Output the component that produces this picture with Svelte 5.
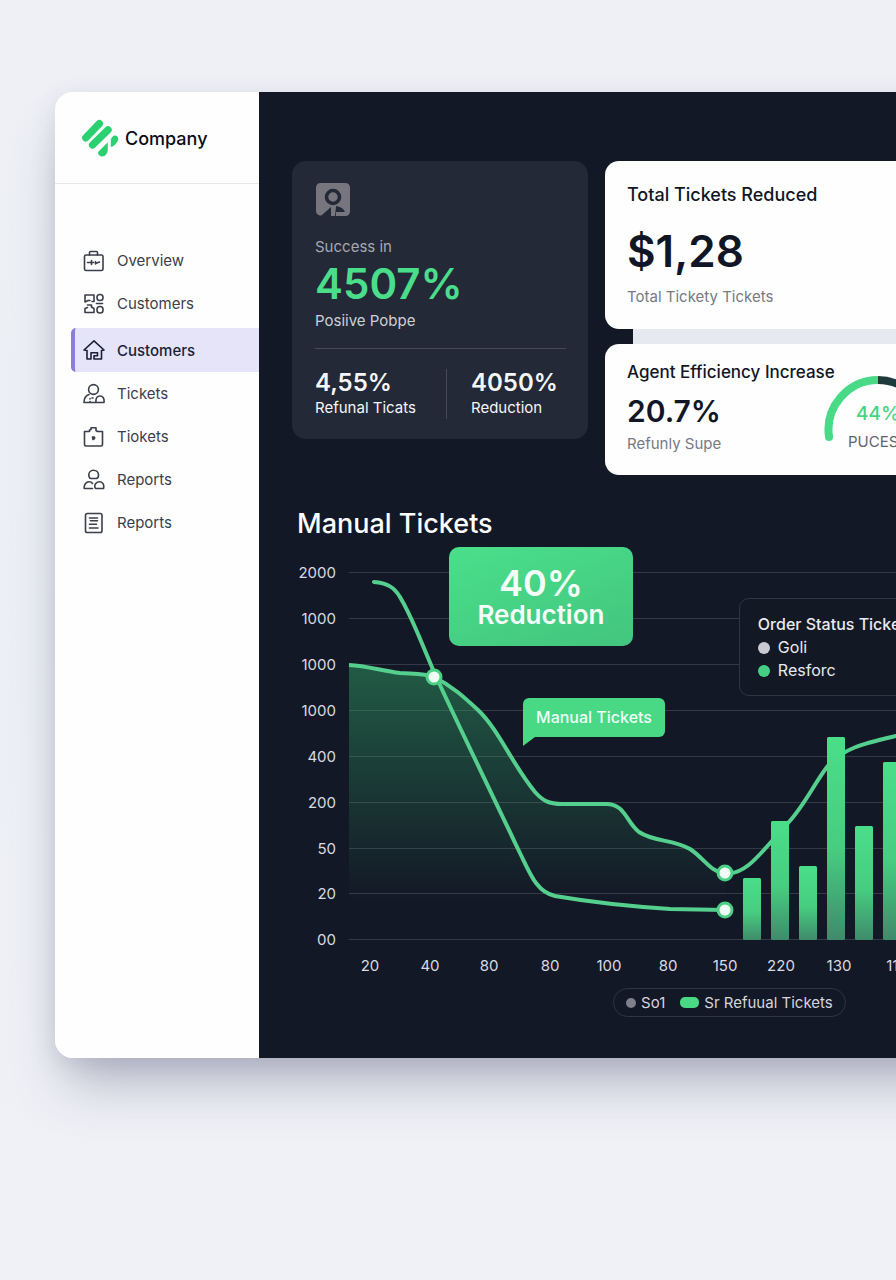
<script>
  const nav = [
    { label: 'Overview', icon: 'case' },
    { label: 'Customers', icon: 'grid' },
    { label: 'Customers', icon: 'home', active: true },
    { label: 'Tickets', icon: 'agent' },
    { label: 'Tiokets', icon: 'bag' },
    { label: 'Reports', icon: 'group' },
    { label: 'Reports', icon: 'doc' }
  ];

  const rows = [
    { y: 573, label: '2000' },
    { y: 619, label: '1000' },
    { y: 665, label: '1000' },
    { y: 711, label: '1000' },
    { y: 757, label: '400' },
    { y: 803, label: '200' },
    { y: 849, label: '50' },
    { y: 894, label: '20' },
    { y: 940, label: '00' }
  ];

  const ticks = [
    { x: 370, label: '20' },
    { x: 430, label: '40' },
    { x: 489, label: '80' },
    { x: 550, label: '80' },
    { x: 609, label: '100' },
    { x: 668, label: '80' },
    { x: 725, label: '150' },
    { x: 781, label: '220' },
    { x: 839, label: '130' },
    { x: 897, label: '110' }
  ];

  const bars = [
    { x: 743, top: 878 },
    { x: 771, top: 821 },
    { x: 799, top: 866 },
    { x: 827, top: 737 },
    { x: 855, top: 826 },
    { x: 883, top: 762 }
  ];

  const points = [
    { x: 434, y: 677 },
    { x: 725, y: 873 },
    { x: 725, y: 910 }
  ];

  const trend =
    'M349 665C368 666 382 671 400 673C412 674 424 673 434 677C452 686 464 697 478 710C499 730 512 764 535 792C543 801 549 804 562 804L605 804C625 803 626 822 639 832C654 842 672 839 690 849C704 858 711 873 725 873';
  const recovery =
    'C742 876 757 858 771 842L788 823C804 806 814 784 827 767C842 748 866 743 896 736C916 732 934 728 954 724';
</script>

<div class="page">
  <div class="shell">
    <aside class="sidebar">
      <header class="brand">
        <svg class="logo" viewBox="0 0 38 38" aria-hidden="true">
          <g stroke="#2bd171" stroke-width="7.400" stroke-linecap="round" fill="none">
            <path d="M4.800 18.800 18.400 4.600" />
            <path d="M11.600 25.800 27 10.800" />
          </g>
          <path d="M17.500 32.500 26.800 23.200v7.600c0 3.700-2.600 6.700-5.600 6.700-2.600 0-5-2.400-3.700-5z" fill="#2bd171" />
          <path d="M29.800 28v-5.800c0-3 2-5.700 4.200-5.700 2.600 0 4.200 3 2.700 5.400-1.500 2.800-3.600 5.400-6.900 6.100z" fill="#2bd171" />
        </svg>
        <span>Company</span>
      </header>
      <nav>
        {#each nav as item}
          <a href="#top" class:active={item.active} aria-current={item.active ? 'page' : undefined}>
            <svg class="icon" viewBox="0 0 22 22" aria-hidden="true">
              {#if item.icon === 'case'}
                <rect x="1.500" y="5" width="18.500" height="15.500" rx="1.500" />
                <path d="M6.500 5V2.500Q6.500 1.500 7.500 1.500H13.500Q14.500 1.500 14.500 2.500V5M4.500 12.500H10.500M8.500 10.500V14.500M12.500 13.500 16.500 12M12.500 11.500V14" />
              {:else if item.icon === 'grid'}
                <path d="M7 7.500H5L2 9V2H11V8.500H9M4.500 12H8.500V14L11 15.500V19.500H2V15.500L4.500 14.500" />
                <rect x="14" y="1.500" width="6" height="6" rx="2.800" />
                <rect x="14" y="13.500" width="6" height="6.500" rx="2.800" />
                <path d="M13.500 10.500H19.500" />
              {:else if item.icon === 'home'}
                <path d="M4 11.500 1 11 11 1.800 21 11 18.500 11.500V20H11V16.800H14.500V13.800H8V20H4Z" />
              {:else if item.icon === 'agent'}
                <circle cx="10.500" cy="6.500" r="4.900" />
                <path d="M6 11.500C2.500 12.500 1 15 1 19.500H21C21.500 15.500 20 13 17 13S12.500 15 13 19.500M7 15.500V16M7 18.500V19.500M10 15H9" />
              {:else if item.icon === 'bag'}
                <path d="M1.500 5.500H6.500V4L8 3.500V1.800H13V4.500L14.500 5.500H19.500V18.500Q19.500 20 18 20H3Q1.500 20 1.500 18.500Z" />
                <path d="M9.500 11H11.500V12.500L10 13.500Z" fill="currentColor" />
              {:else if item.icon === 'group'}
                <path d="M10.500 1.200C7.500 1.200 5.800 3.500 5.800 6Q6 9.500 8 9.500H13.500Q15.500 9 15.500 6C15.500 3.500 13.500 1.200 10.500 1.200Z" />
                <path d="M9.500 19.500H1.200C0.800 15.500 3 12.800 6 12.800Q8.500 12.800 9.500 14.500M13 19.500H20.500C21.500 15.500 19.500 12.800 16.500 12.800S11 15.500 12 18.500Q12.300 19.500 13 19.500Z" />
              {:else}
                <rect x="2.500" y="1.500" width="16.500" height="19" rx="1.800" />
                <path d="M6.500 6H14.500M7.500 8.700H14.500M6.500 12.300H13.500M6.500 16H15" />
              {/if}
            </svg>
            <span>{item.label}</span>
          </a>
        {/each}
      </nav>
    </aside>

    <main>
      <section class="cards">
        <article class="card dark">
          <svg class="badge" viewBox="0 0 36 34" aria-hidden="true">
            <path d="M6 0H30Q35 0 35 5V28Q35 33 30 33H21L20 24H16L7 32Q5 33 4 32Q1 31 1 28V5Q1 0 6 0Z" fill="#77767f" />
            <path d="M15 26 6.500 33.500H15Z" fill="#242937" />
            <path d="M16 23H20V33H16Z" fill="#77767f" />
            <circle cx="18" cy="14" r="6.500" fill="#77767f" stroke="#242937" stroke-width="3.600" />
            <path d="M21 23Q28 24 30 29L21 29Z" fill="#242937" />
          </svg>
          <p class="muted">Success in</p>
          <p class="headline">4507%</p>
          <p class="soft">Posiive Pobpe</p>
          <div class="split">
            <div>
              <strong>4,55%</strong>
              <span>Refunal Ticats</span>
            </div>
            <div>
              <strong>4050%</strong>
              <span>Reduction</span>
            </div>
          </div>
        </article>

        <div class="stack">
          <article class="card light total">
            <h2>Total Tickets Reduced</h2>
            <p class="money">$1,28</p>
            <p class="note">Total Tickety Tickets</p>
          </article>
          <div class="strip"></div>
          <article class="card light agent">
            <div class="figures">
              <h2>Agent Efficiency Increase</h2>
              <p class="rate">20.7%</p>
              <p class="note">Refunly Supe</p>
            </div>
            <div class="gauge">
              <svg viewBox="0 0 108 68" aria-hidden="true">
                <path d="M54 4A50 50 0 0 1 103 63" stroke="#1f3a3d" />
                <path d="M5 61A50 50 0 0 1 54 4" stroke="#48da86" />
                <circle cx="5" cy="61" r="4" fill="#48da86" stroke="none" />
              </svg>
              <p><b>44%</b><span>PUCESS</span></p>
            </div>
          </article>
        </div>
      </section>

      <section class="report">
        <h1>Manual Tickets</h1>
        <div class="chart">
          <svg class="plot" viewBox="292 547 662 438" role="img" aria-label="Manual Tickets">
            <defs>
              <linearGradient id="area" gradientUnits="userSpaceOnUse" x1="0" y1="665" x2="0" y2="900">
                <stop offset="0" stop-color="#31a466" stop-opacity="0.480" />
                <stop offset="0.500" stop-color="#31a466" stop-opacity="0.240" />
                <stop offset="1" stop-color="#31a466" stop-opacity="0" />
              </linearGradient>
              <linearGradient id="bar" x1="0" y1="0" x2="0" y2="1">
                <stop offset="0" stop-color="#4ade88" />
                <stop offset="0.550" stop-color="#47cd80" />
                <stop offset="1" stop-color="#3f8b6b" />
              </linearGradient>
            </defs>
            {#each rows as row}
              <path class="rule" d={`M349 ${row.y - 0.5}H954`} />
              <text x="336" y={row.y + 5} text-anchor="end">{row.label}</text>
            {/each}
            <path d={`${trend}V940H349Z`} fill="url(#area)" />
            <path class="line" d={trend + recovery} />
            <path
              class="line"
              stroke-linecap="round"
              d="M374 582C387 583 394 587 400 597C406 607 412 620 418 634L434 672C452 712 480 769 518 849C530 873 536 892 555 896C590 902 640 907 670 909L725 910"
            />
            {#each bars as bar}
              <rect x={bar.x} y={bar.top} width="18" height={940 - bar.top} rx="1.500" fill="url(#bar)" />
            {/each}
            {#each points as point}
              <circle cx={point.x} cy={point.y} r="7" fill="#effdf5" stroke="#4bd086" stroke-width="3" />
            {/each}
            {#each ticks as tick}
              <text x={tick.x} y="971" text-anchor="middle">{tick.label}</text>
            {/each}
          </svg>

          <div class="callout"><strong>40%</strong><span>Reduction</span></div>
          <div class="tip">Manual Tickets</div>
          <div class="status">
            <h3>Order Status Tickets</h3>
            <p><i class="dot"></i>Goli</p>
            <p><i class="dot green"></i>Resforc</p>
          </div>
        </div>
        <div class="legend">
          <i class="dot grey"></i><span>So1</span>
          <i class="pill"></i><span>Sr Refuual Tickets</span>
        </div>
      </section>
    </main>
  </div>
</div>

<style>
  :global(body) {
    background: #eef0f5;
  }

  .page {
    box-sizing: border-box;
    min-height: 100vh;
    padding: 92px 0 222px 55px;
    overflow: hidden;
    background: linear-gradient(#eef0f5, #eceff5 50%, #f0f1f6);
    font-family: Inter, 'Liberation Sans', sans-serif;
    font-size: 16px;
    color: #111626;
  }

  .page * {
    box-sizing: border-box;
  }

  h1,
  h2,
  h3,
  p {
    margin: 0;
    font-weight: 400;
    white-space: nowrap;
  }

  .shell {
    display: flex;
    min-height: 966px;
    margin-right: -90px;
    border-radius: 18px;
    box-shadow:
      0 36px 52px -12px rgba(64, 68, 104, 0.34),
      0 6px 24px rgba(64, 68, 104, 0.12);
  }

  .sidebar {
    flex: 0 0 204px;
    border-radius: 18px 0 0 18px;
    background: #fefefe;
  }

  .brand {
    display: flex;
    align-items: center;
    gap: 6px;
    height: 92px;
    padding: 1px 26px 0;
    border-bottom: 1px solid #e8e9ed;
    font-size: 18px;
    font-weight: 500;
    color: #090b16;
  }

  .logo {
    width: 38px;
    height: 38px;
  }

  nav {
    padding: 55px 0 0 16px;
  }

  nav a {
    display: flex;
    align-items: center;
    gap: 12px;
    height: 43px;
    padding-left: 12px;
    font-size: 15px;
    color: #3b3e4b;
    text-decoration: none;
  }

  nav a.active {
    height: 44px;
    margin-top: 3px;
    padding-left: 8px;
    border-left: 4px solid #8a7ddf;
    border-radius: 5px 0 0 5px;
    background: #e5e4f8;
    font-weight: 500;
    color: #1c1d38;
  }

  .icon {
    width: 22px;
    height: 22px;
    fill: none;
    stroke: currentColor;
    stroke-width: 1.6;
    stroke-linejoin: round;
    stroke-linecap: round;
  }

  main {
    flex: 1;
    min-width: 0;
    padding: 69px 32px 40px 33px;
    background: #131826;
  }

  .cards {
    display: grid;
    grid-template-columns: 296px minmax(0, 1fr);
    align-items: start;
    gap: 17px;
  }

  .card {
    border-radius: 14px;
  }

  .dark {
    padding: 22px 22px 20px 23px;
    background: #242937;
    font-size: 15px;
    color: #f5f6f9;
  }

  .badge {
    display: block;
    width: 36px;
    height: 34px;
    margin-bottom: 19px;
  }

  .muted {
    line-height: 22px;
    color: #a6a8b3;
  }

  .headline {
    font-size: 42px;
    font-weight: 600;
    line-height: 52px;
    color: #4ade8b;
  }

  .soft {
    line-height: 22px;
    color: #ced0d8;
  }

  .split {
    display: grid;
    grid-template-columns: 131px 1fr;
    margin-top: 16px;
    padding-top: 20px;
    border-top: 1px solid #464a57;
  }

  .split div {
    display: flex;
    flex-direction: column;
    white-space: nowrap;
  }

  .split div + div {
    padding-left: 24px;
    border-left: 1px solid #464a57;
  }

  .split strong {
    font-size: 24px;
    font-weight: 600;
    line-height: 28px;
  }

  .split span {
    line-height: 22px;
  }

  .light {
    padding: 0 22px;
    background: #fefefe;
  }

  .total {
    height: 168px;
    padding-top: 22px;
  }

  .total h2 {
    font-size: 18px;
    font-weight: 500;
    line-height: 24px;
  }

  .money {
    margin: 18px 0 8px;
    font-size: 44px;
    font-weight: 600;
    line-height: 52px;
  }

  .note {
    font-size: 15px;
    line-height: 24px;
    color: #777984;
  }

  .strip {
    height: 15px;
    margin-left: 28px;
    background: #e7e9f0;
  }

  .agent {
    display: flex;
    height: 131px;
    padding-top: 16px;
  }

  .figures {
    flex: 1;
    min-width: 0;
  }

  .agent h2 {
    font-size: 17px;
    font-weight: 500;
    line-height: 24px;
  }

  .rate {
    margin: 8px 0 2px;
    font-size: 30px;
    font-weight: 600;
    line-height: 38px;
  }

  .gauge {
    position: relative;
    flex: none;
    width: 108px;
    margin-top: 16px;
  }

  .gauge svg {
    display: block;
    width: 108px;
    fill: none;
    stroke-width: 8;
  }

  .gauge p {
    position: absolute;
    top: 24px;
    left: 0;
    width: 100%;
    display: flex;
    flex-direction: column;
    align-items: center;
  }

  .gauge b {
    font-size: 19px;
    font-weight: 500;
    line-height: 28px;
    color: #45d482;
  }

  .gauge span {
    font-size: 15px;
    line-height: 28px;
    color: #60636e;
  }

  .report {
    margin-top: 31px;
  }

  h1 {
    padding-left: 5px;
    font-size: 27px;
    font-weight: 500;
    line-height: 36px;
    color: #fff;
  }

  .chart {
    position: relative;
    margin-top: 5px;
  }

  .plot {
    display: block;
    width: 100%;
    font-size: 15px;
    fill: #d9dbe2;
  }

  .rule {
    stroke: #343946;
    stroke-width: 1;
  }

  .line {
    fill: none;
    stroke: #55cf8d;
    stroke-width: 4;
  }

  .callout {
    position: absolute;
    top: 0;
    left: 23.7%;
    display: flex;
    flex-direction: column;
    align-items: center;
    width: 184px;
    padding: 19px 0 17px;
    border-radius: 10px;
    background: linear-gradient(160deg, #4adf8b, #43c57e);
    color: #f4fff9;
    font-weight: 600;
  }

  .callout strong {
    font-size: 36px;
    font-weight: 600;
    line-height: 34px;
  }

  .callout span {
    font-size: 26px;
    line-height: 29px;
  }

  .tip {
    position: absolute;
    top: 34.4%;
    left: 34.9%;
    padding: 0 13px;
    border-radius: 6px 6px 6px 0;
    background: #49d884;
    font-weight: 500;
    line-height: 39px;
    color: #effff6;
  }

  .tip::after {
    content: '';
    position: absolute;
    top: 100%;
    left: 0;
    border-top: 9px solid #49d884;
    border-right: 12px solid transparent;
  }

  .status {
    position: absolute;
    top: 11.7%;
    left: 67.5%;
    padding: 13px 18px;
    width: 198px;
    border: 1px solid #303543;
    border-radius: 10px;
    background: #131825;
    color: #e9eaf0;
  }

  .status h3 {
    font-size: 16px;
    font-weight: 500;
    line-height: 24px;
  }

  .status p {
    display: flex;
    align-items: center;
    gap: 8px;
    line-height: 23px;
  }

  .dot {
    flex: none;
    width: 12px;
    height: 12px;
    border-radius: 50%;
    background: #c9c9d1;
  }

  .dot.green {
    background: #46cf84;
  }

  .dot.grey {
    width: 10px;
    height: 10px;
    background: #7e808b;
  }

  .legend {
    display: flex;
    align-items: center;
    gap: 5px;
    width: max-content;
    height: 29px;
    margin: 3px 0 0 48.5%;
    padding: 0 12px;
    border: 1px solid #303543;
    border-radius: 15px;
    font-size: 15px;
    color: #d4d6de;
  }

  .pill {
    width: 19px;
    height: 11px;
    margin-left: 10px;
    border-radius: 5px;
    background: #49d884;
  }
</style>
